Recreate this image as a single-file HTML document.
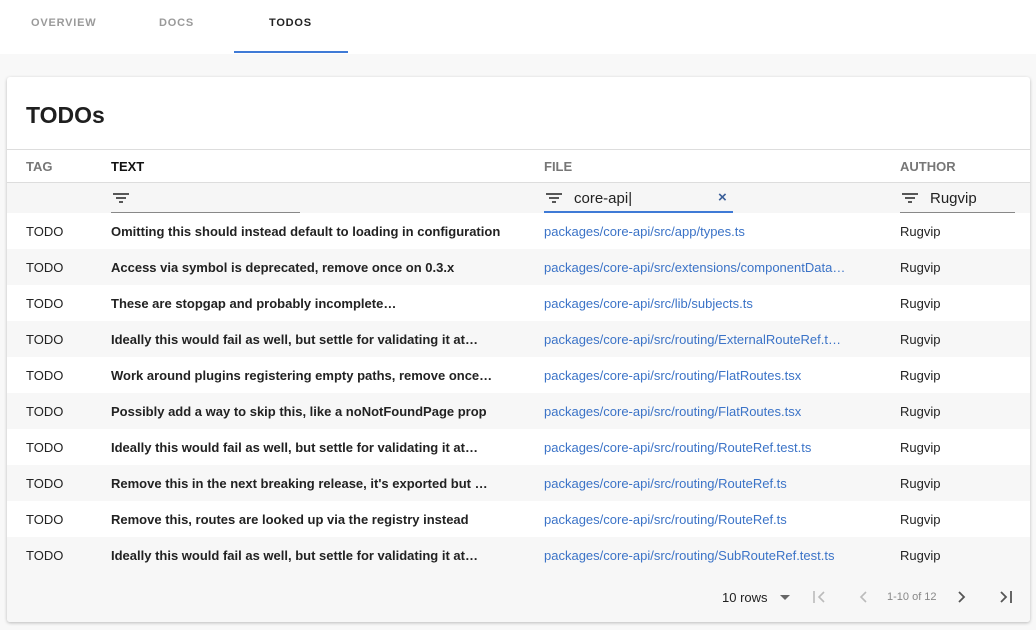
<!DOCTYPE html>
<html><head><style>
*{box-sizing:border-box;margin:0;padding:0}
body{width:1036px;height:630px;background:#f8f8f8;font-family:"Liberation Sans",sans-serif;position:relative;overflow:hidden;color:#222}
.tabs{position:absolute;left:0;top:0;width:1036px;height:54px;background:#fff}
.tab{position:absolute;top:16px;font-size:11px;font-weight:bold;letter-spacing:.8px;color:#9a9a9a}
.ul{position:absolute;left:234px;top:51px;width:114px;height:2px;background:#3f7ad6}
.card{position:absolute;left:7px;top:77px;width:1023px;height:545px;background:#fff;box-shadow:0 1px 3px rgba(0,0,0,.25);border-radius:3px;overflow:hidden}
.title{position:absolute;left:19px;top:25px;font-size:23px;font-weight:bold;color:#1f1f1f}
.hdr{position:absolute;left:0;top:72px;width:100%;height:34px;border-top:1px solid #ddd;border-bottom:1px solid #ddd}
.hdr span{position:absolute;top:9px;font-size:13px;font-weight:bold;color:#777}
.filt{position:absolute;left:0;top:106px;width:100%;height:30px;background:#f6f6f6}
.f{position:absolute;top:0;height:30px;border-bottom:1px solid #888;font-size:15px;color:#222}
.f svg{position:absolute;left:2px;top:10px}
.f .t{position:absolute;left:30px;top:7px}
.row{position:absolute;left:0;width:100%;height:36px;font-size:13px}
.row.g{background:#f7f7f7}
.row span{position:absolute;top:11px;white-space:nowrap}
.c1{left:19px;color:#222}.c2{left:104px;font-weight:bold;color:#222}.c3{left:537px;color:#3b73c7}.c4{left:893px;color:#222}
.foot{position:absolute;left:0;top:496px;width:100%;height:49px;background:#f7f7f7;font-size:13px}
</style></head><body>
<div class="tabs">
<div class="tab" style="left:31px;top:17px">OVERVIEW</div>
<div class="tab" style="left:159px;top:17px">DOCS</div>
<div class="tab" style="left:269px;top:17px;color:#222">TODOS</div>
<div class="ul"></div>
</div>
<div class="card">
<div class="title">TODOs</div>
<div class="hdr"><span style="left:19px">TAG</span><span style="left:104px;color:#111">TEXT</span><span style="left:537px">FILE</span><span style="left:893px">AUTHOR</span></div>
<div class="filt">
<div class="f" style="left:104px;width:189px"><svg width="16" height="10"><path d="M0 1h16M3 5h10M6 9h4" stroke="#222" stroke-width="1.6"/></svg></div>
<div class="f" style="left:537px;width:189px;border-bottom:2px solid #3f7ad6"><svg width="16" height="10"><path d="M0 1h16M3 5h10M6 9h4" stroke="#222" stroke-width="1.6"/></svg><span class="t">core-api|</span><span style="position:absolute;left:174px;top:6px;font-weight:bold;color:#3b5f99;font-size:15px">×</span></div>
<div class="f" style="left:893px;width:115px"><svg width="16" height="10"><path d="M0 1h16M3 5h10M6 9h4" stroke="#222" stroke-width="1.6"/></svg><span class="t">Rugvip</span></div>
</div>
<div class="row" style="top:136px"><span class="c1">TODO</span><span class="c2">Omitting this should instead default to loading in configuration</span><span class="c3">packages/core-api/src/app/types.ts</span><span class="c4">Rugvip</span></div>
<div class="row g" style="top:172px"><span class="c1">TODO</span><span class="c2">Access via symbol is deprecated, remove once on 0.3.x</span><span class="c3">packages/core-api/src/extensions/componentData…</span><span class="c4">Rugvip</span></div>
<div class="row" style="top:208px"><span class="c1">TODO</span><span class="c2">These are stopgap and probably incomplete…</span><span class="c3">packages/core-api/src/lib/subjects.ts</span><span class="c4">Rugvip</span></div>
<div class="row g" style="top:244px"><span class="c1">TODO</span><span class="c2">Ideally this would fail as well, but settle for validating it at…</span><span class="c3">packages/core-api/src/routing/ExternalRouteRef.t…</span><span class="c4">Rugvip</span></div>
<div class="row" style="top:280px"><span class="c1">TODO</span><span class="c2">Work around plugins registering empty paths, remove once…</span><span class="c3">packages/core-api/src/routing/FlatRoutes.tsx</span><span class="c4">Rugvip</span></div>
<div class="row g" style="top:316px"><span class="c1">TODO</span><span class="c2">Possibly add a way to skip this, like a noNotFoundPage prop</span><span class="c3">packages/core-api/src/routing/FlatRoutes.tsx</span><span class="c4">Rugvip</span></div>
<div class="row" style="top:352px"><span class="c1">TODO</span><span class="c2">Ideally this would fail as well, but settle for validating it at…</span><span class="c3">packages/core-api/src/routing/RouteRef.test.ts</span><span class="c4">Rugvip</span></div>
<div class="row g" style="top:388px"><span class="c1">TODO</span><span class="c2">Remove this in the next breaking release, it's exported but …</span><span class="c3">packages/core-api/src/routing/RouteRef.ts</span><span class="c4">Rugvip</span></div>
<div class="row" style="top:424px"><span class="c1">TODO</span><span class="c2">Remove this, routes are looked up via the registry instead</span><span class="c3">packages/core-api/src/routing/RouteRef.ts</span><span class="c4">Rugvip</span></div>
<div class="row g" style="top:460px"><span class="c1">TODO</span><span class="c2">Ideally this would fail as well, but settle for validating it at…</span><span class="c3">packages/core-api/src/routing/SubRouteRef.test.ts</span><span class="c4">Rugvip</span></div>
<div class="foot">
<span style="position:absolute;left:715px;top:17px;color:#222">10 rows</span>
<svg style="position:absolute;left:773px;top:22px" width="10" height="5"><path d="M0 0h10L5 5z" fill="#666"/></svg>
<svg style="position:absolute;left:805px;top:17px" width="14" height="14"><path d="M2 1v12M12 2L7 7l5 5" stroke="#bbb" stroke-width="1.6" fill="none"/></svg>
<svg style="position:absolute;left:852px;top:17px" width="10" height="14"><path d="M7 2L2 7l5 5" stroke="#bbb" stroke-width="1.6" fill="none"/></svg>
<span style="position:absolute;left:880px;top:18px;font-size:11px;color:#888">1-10 of 12</span>
<svg style="position:absolute;left:950px;top:17px" width="10" height="14"><path d="M2 2l5 5-5 5" stroke="#555" stroke-width="1.8" fill="none"/></svg>
<svg style="position:absolute;left:993px;top:17px" width="14" height="14"><path d="M1 2l5 5-5 5M11 1v12" stroke="#555" stroke-width="1.8" fill="none"/></svg>
</div>
</div>
</body></html>
